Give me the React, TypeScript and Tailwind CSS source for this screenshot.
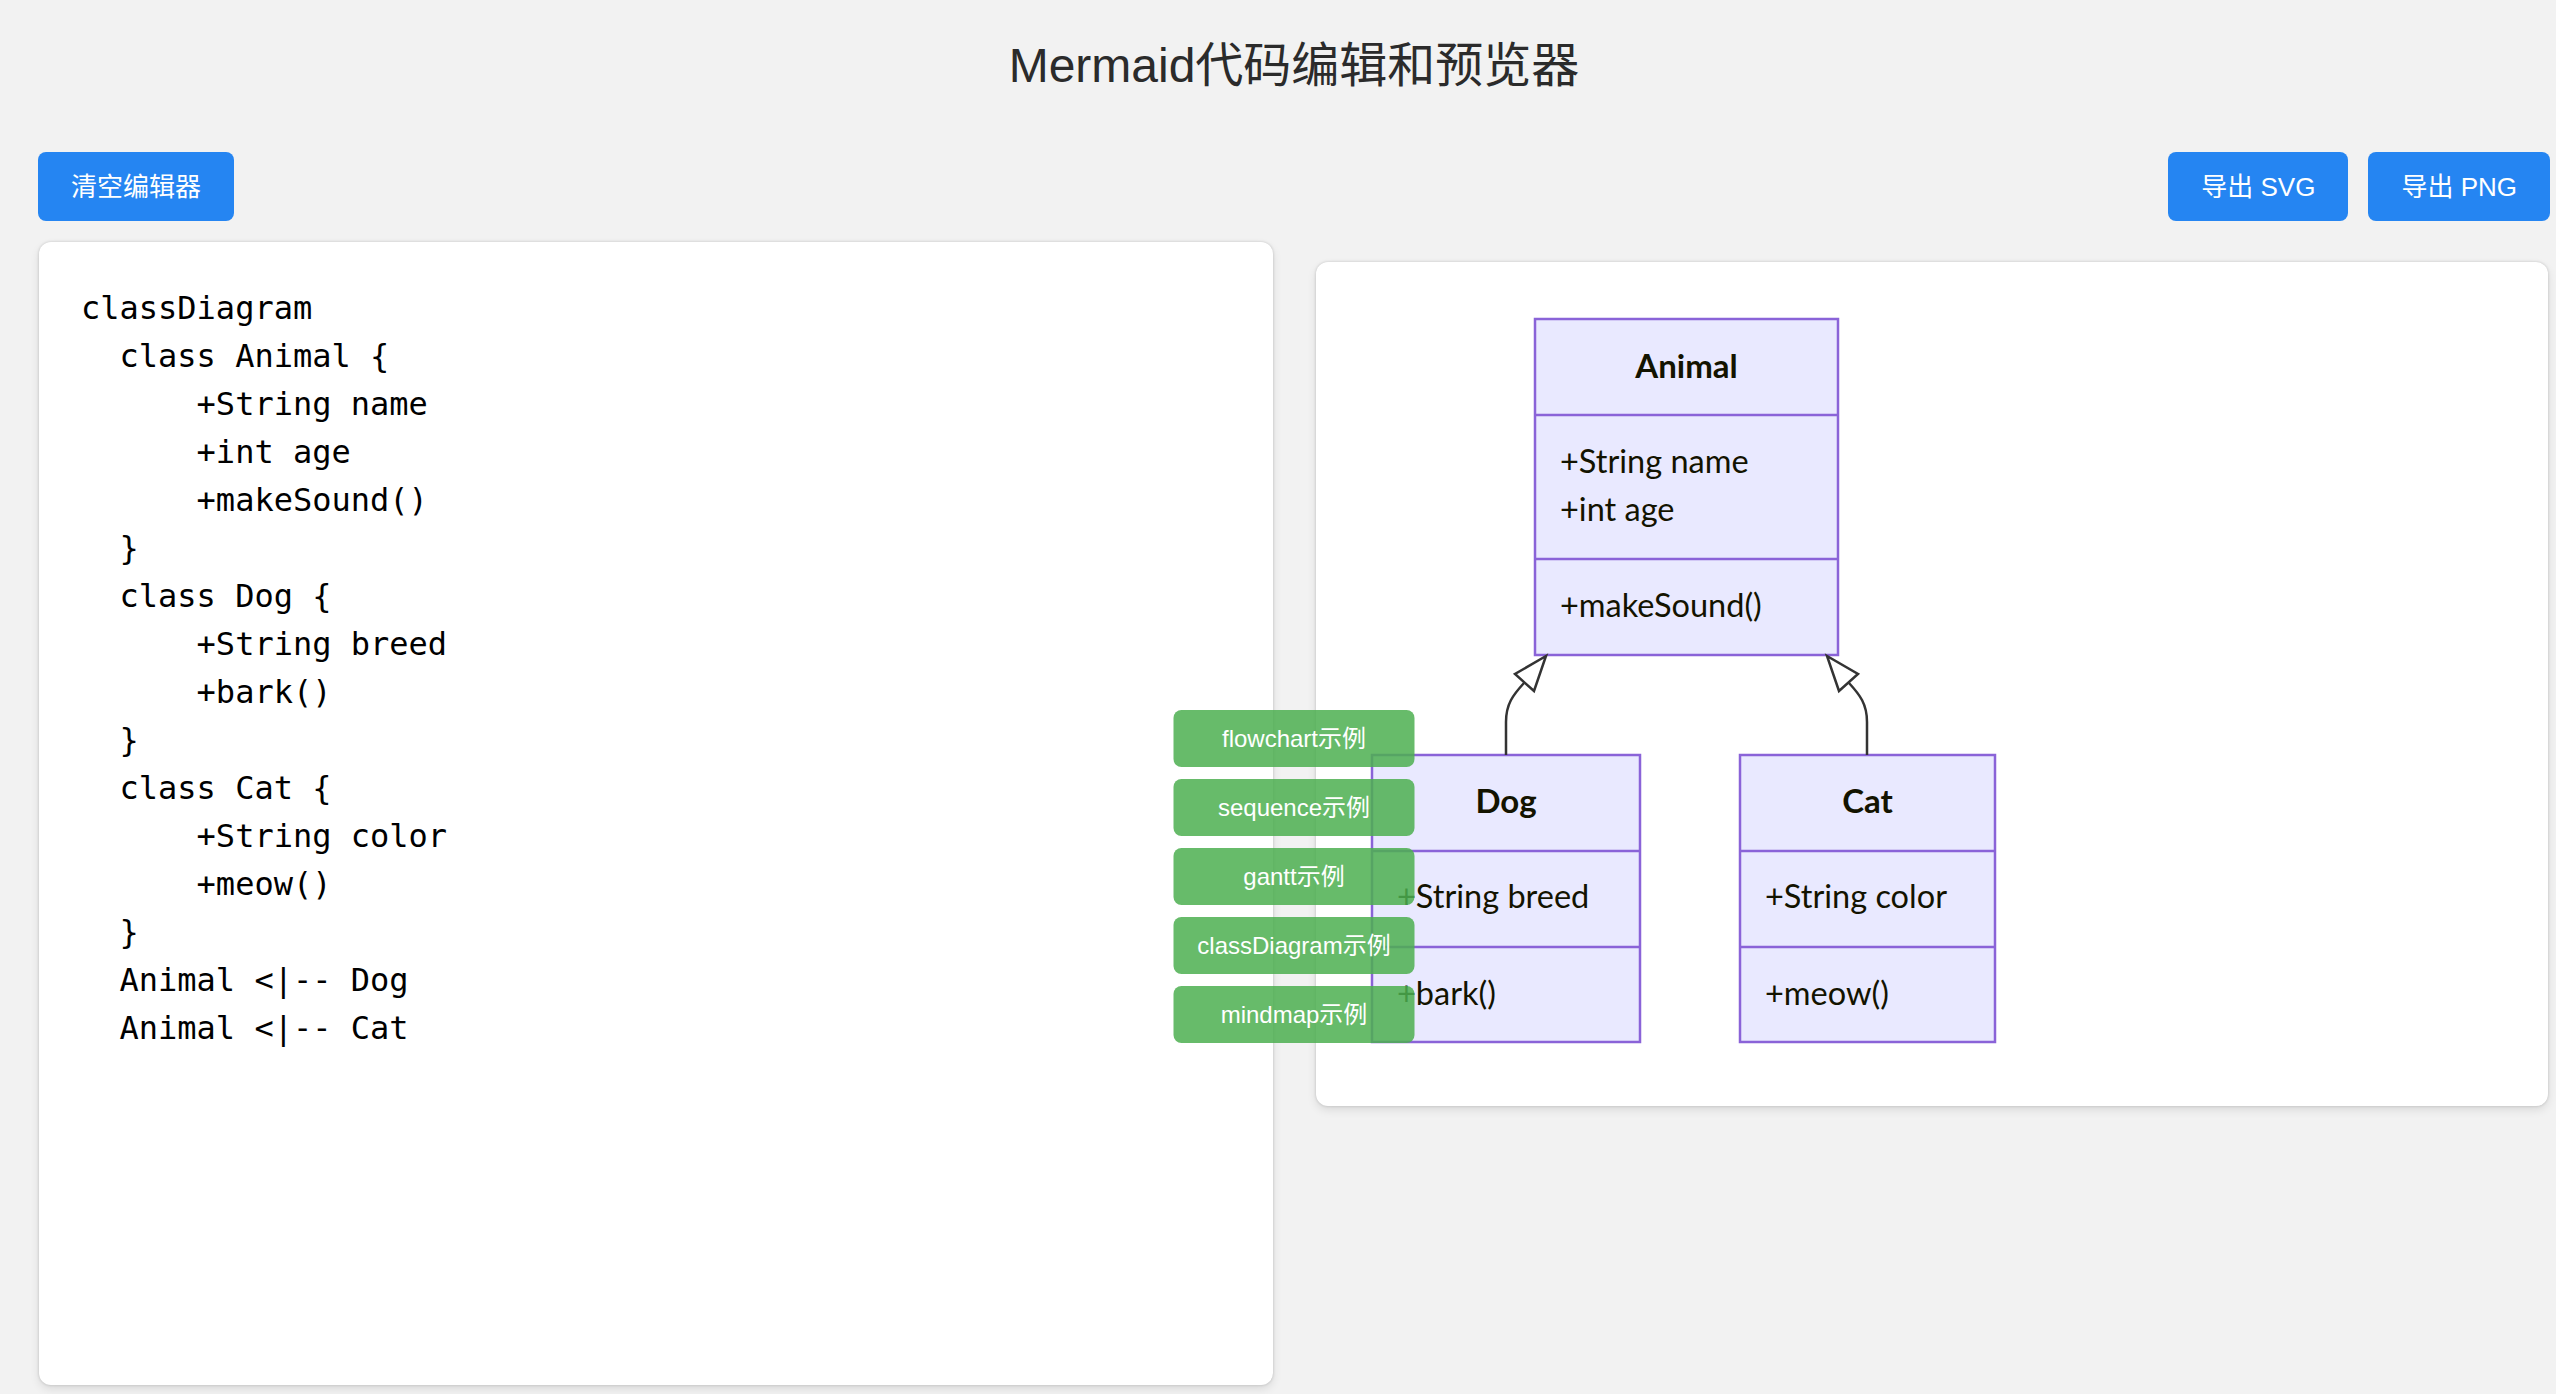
import type { ReactNode } from "react";

const CODE = `classDiagram
  class Animal {
      +String name
      +int age
      +makeSound()
  }
  class Dog {
      +String breed
      +bark()
  }
  class Cat {
      +String color
      +meow()
  }
  Animal <|-- Dog
  Animal <|-- Cat`;

const EXAMPLES = ["flowchart示例", "sequence示例", "gantt示例", "classDiagram示例", "mindmap示例"];

const STROKE = "#8a63d8";
const FILL = "#e9e9ff";
const FONT = "Lato, 'Noto Sans', sans-serif";

function Btn({ children }: { children: ReactNode }) {
  return (
    <button
      type="button"
      className="h-[69px] rounded-[8px] bg-[#2585f2] px-[33px] text-[26px] leading-none text-white"
    >
      {children}
    </button>
  );
}

type BoxProps = {
  x: number;
  y: number;
  w: number;
  cuts: [number, number];
  bottom: number;
  title: string;
  titleY: number;
  attrs: { text: string; y: number }[];
};

function ClassBox({ x, y, w, cuts, bottom, title, titleY, attrs }: BoxProps) {
  return (
    <g>
      <rect x={x} y={y} width={w} height={bottom - y} fill={FILL} stroke={STROKE} strokeWidth={2.5} />
      <line x1={x} y1={cuts[0]} x2={x + w} y2={cuts[0]} stroke={STROKE} strokeWidth={2.5} />
      <line x1={x} y1={cuts[1]} x2={x + w} y2={cuts[1]} stroke={STROKE} strokeWidth={2.5} />
      <text x={x + w / 2} y={titleY} textAnchor="middle" fontFamily={FONT} fontWeight={700} fontSize={33} fill="#131300">
        {title}
      </text>
      {attrs.map((a) => (
        <text key={a.text} x={x + 25} y={a.y} fontFamily={FONT} fontSize={32.5} fill="#131300">
          {a.text}
        </text>
      ))}
    </g>
  );
}

function Diagram() {
  return (
    <svg width={680} height={760} viewBox="0 0 680 760" className="block overflow-visible">
      <ClassBox
        x={179}
        y={17}
        w={303}
        cuts={[113, 257]}
        bottom={353}
        title="Animal"
        titleY={76}
        attrs={[
          { text: "+String name", y: 171 },
          { text: "+int age", y: 219 },
          { text: "+makeSound()", y: 315 },
        ]}
      />
      <ClassBox
        x={16}
        y={453}
        w={268}
        cuts={[549, 645]}
        bottom={740}
        title="Dog"
        titleY={511}
        attrs={[
          { text: "+String breed", y: 606 },
          { text: "+bark()", y: 703 },
        ]}
      />
      <ClassBox
        x={384}
        y={453}
        w={255}
        cuts={[549, 645]}
        bottom={740}
        title="Cat"
        titleY={511}
        attrs={[
          { text: "+String color", y: 606 },
          { text: "+meow()", y: 703 },
        ]}
      />
      {/* inheritance edges */}
      <path d="M168,381 C157,393 150,402 150,420 L150,453" fill="none" stroke="#333" strokeWidth={2.5} />
      <polygon points="190,354 159,372 178,389" fill="#fff" stroke="#333" strokeWidth={2.5} strokeLinejoin="miter" />
      <path d="M493,381 C504,393 511,402 511,420 L511,453" fill="none" stroke="#333" strokeWidth={2.5} />
      <polygon points="471,354 502,372 483,389" fill="#fff" stroke="#333" strokeWidth={2.5} strokeLinejoin="miter" />
    </svg>
  );
}

export default function App() {
  return (
    <div className="h-screen overflow-hidden bg-[#f2f2f2] pl-[38px] pr-[6px] font-['Liberation_Sans','Noto_Sans_CJK_SC',sans-serif]">
      <div className="relative">
        <h1 className="pt-[37px] text-center text-[48px] font-normal leading-[58px] text-[#2b2b2b]">
          Mermaid代码编辑和预览器
        </h1>

        <div className="mt-[57px] flex items-center justify-between">
          <Btn>清空编辑器</Btn>
          <div className="flex gap-[20px]">
            <Btn>导出 SVG</Btn>
            <Btn>导出 PNG</Btn>
          </div>
        </div>

        <div className="mt-[21px] flex items-start">
          <div className="ml-px h-[1143px] w-[1234px] rounded-[12px] bg-white shadow-[0_0_3px_rgba(0,0,0,0.18),0_4px_10px_rgba(0,0,0,0.1)]">
            <textarea
              defaultValue={CODE}
              spellCheck={false}
              className="block h-full w-full resize-none rounded-[12px] bg-transparent p-[42px] font-['DejaVu_Sans_Mono',monospace] text-[32px] leading-[48px] text-black outline-none"
            />
          </div>
          <div className="ml-[43px] mt-[20px] h-[844px] w-[1232px] rounded-[12px] bg-white p-[40px] shadow-[0_0_3px_rgba(0,0,0,0.18),0_4px_10px_rgba(0,0,0,0.1)]">
            <Diagram />
          </div>
        </div>

        <div className="absolute left-1/2 top-[710px] z-10 flex -translate-x-1/2 flex-col gap-[12px]">
          {EXAMPLES.map((label) => (
            <button
              key={label}
              type="button"
              className="flex h-[57px] w-[241px] items-center justify-center rounded-[8px] bg-[#4caf50]/85 text-[24px] text-white"
            >
              {label}
            </button>
          ))}
        </div>
      </div>
    </div>
  );
}
